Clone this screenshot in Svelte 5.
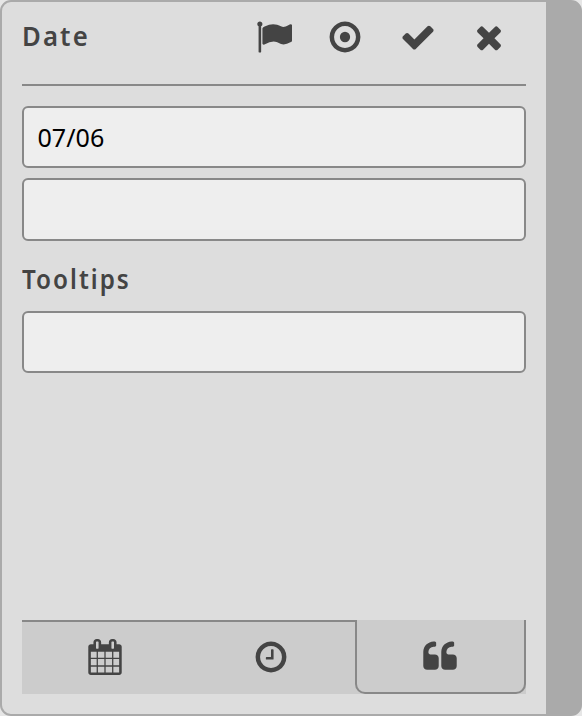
<script>
  const ring = 'q0 209-103 385.5t-279.5 279.5-385.5 103-385.5-103-279.5-279.5-103-385.5 103-385.5 279.5-279.5 385.5-103 385.5 103 279.5 279.5 103 385.5z';
  const quote = 'v384q0 80-56 136t-136 56h-384q-80 0-136-56t-56-136v-704q0-104 40.5-198.5t109.5-163.5 163.5-109.5 198.5-40.5h64q26 0 45 19t19 45v128q0 26-19 45t-45 19h-64q-106 0-181 75t-75 181v32q0 40 28 68t68 28h224q80 0 136 56t56 136z';
  const actions = [
    { name: 'Flag', width: 71, d: 'M320 256q0 72-64 110v1266q0 13-9.5 22.5t-22.5 9.5h-64q-13 0-22.5-9.5t-9.5-22.5v-1266q-64-38-64-110 0-53 37.5-90.5t90.5-37.5 90.5 37.5 37.5 90.5zm1472 64v763q0 25-12.5 38.5t-39.5 27.5q-215 116-369 116-61 0-123.5-22t-108.5-48-115.5-48-142.5-22q-192 0-464 146-17 9-33 9-26 0-45-19t-19-45v-742q0-32 31-55 21-14 79-43 236-120 421-120 107 0 200 29t219 88q38 19 88 19 54 0 117.5-21t110-47 88-47 54.5-21q26 0 45 19t19 45z' },
    { name: 'Target', width: 72, d: 'M896 640q106 0 181 75t75 181-75 181-181 75-181-75-75-181 75-181 181-75zm0-288q-148 0-273 73t-198 198-73 273 73 273 198 198 273 73 273-73 198-198 73-273-73-273-198-198-273-73zm768 544' + ring },
    { name: 'Confirm', width: 74, d: 'M1671 566q0 40-28 68l-724 724-136 136q-28 28-68 28t-68-28l-136-136-362-362q-28-28-28-68t28-68l136-136q28-28 68-28t68 28l294 295 656-657q28-28 68-28t68 28l136 136q28 28 28 68z' },
    { name: 'Close', width: 68, d: 'M1490 1322q0 40-28 68l-136 136q-28 28-68 28t-68-28l-294-294-294 294q-28 28-68 28t-68-28l-136-136q-28-28-28-68t28-68l294-294-294-294q-28-28-28-68t28-68l136-136q28-28 68-28t68 28l294 294 294-294q28-28 68-28t68 28l136 136q28 28 28 68t-28 68l-294 294 294 294q28 28 28 68z' },
  ];
  const tabs = [
    { name: 'Calendar', d: 'M192 1664h288v-288h-288v288zm352 0h320v-288h-320v288zm-352-352h288v-320h-288v320zm352 0h320v-320h-320v320zm-352-384h288v-288h-288v288zm736 736h320v-288h-320v288zm-384-736h320v-288h-320v288zm768 736h288v-288h-288v288zm-384-352h320v-320h-320v320zm-352-864v-288q0-13-9.5-22.5t-22.5-9.5h-64q-13 0-22.5 9.5t-9.5 22.5v288q0 13 9.5 22.5t22.5 9.5h64q13 0 22.5-9.5t9.5-22.5zm736 864h288v-320h-288v320zm-384-384h320v-288h-320v288zm384 0h288v-288h-288v288zm32-480v-288q0-13-9.5-22.5t-22.5-9.5h-64q-13 0-22.5 9.5t-9.5 22.5v288q0 13 9.5 22.5t22.5 9.5h64q13 0 22.5-9.5t9.5-22.5zm384-64v1280q0 52-38 90t-90 38h-1408q-52 0-90-38t-38-90v-1280q0-52 38-90t90-38h128v-96q0-66 47-113t113-47h64q66 0 113 47t47 113v96h384v-96q0-66 47-113t113-47h64q66 0 113 47t47 113v96h128q52 0 90 38t38 90z' },
    { name: 'Time', d: 'M1024 544v448q0 14-9 23t-23 9h-320q-14 0-23-9t-9-23v-64q0-14 9-23t23-9h224v-352q0-14 9-23t23-9h64q14 0 23 9t9 23zm416 352q0-148-73-273t-198-198-273-73-273 73-198 198-73 273 73 273 198 198 273 73 273-73 198-198 73-273zm224 0' + ring },
    { name: 'Quote', d: 'M832 960' + quote + 'M1728 960' + quote },
  ];
  let active = $state('Quote');
  let date = $state('07/06');
  let note = $state('');
  let tooltip = $state('');
</script>

{#snippet icon(d)}
  <svg width="36" height="36" viewBox="0 0 1792 1792" aria-hidden="true"><path {d} /></svg>
{/snippet}

<main class="panel">
  <header>
    <h1><span>Date</span></h1>
    <nav>
      {#each actions as a}
        <button style="width: {a.width}px" aria-label={a.name}>{@render icon(a.d)}</button>
      {/each}
    </nav>
  </header>
  <div class="field"><input aria-label="Date" bind:value={date} /></div>
  <div class="field second"><input aria-label="Note" bind:value={note} /></div>
  <h2><span>Tooltips</span></h2>
  <div class="field"><input aria-label="Tooltips" bind:value={tooltip} /></div>
  <footer>
    {#each tabs as t}
      <button class:active={active === t.name} aria-label={t.name} onclick={() => (active = t.name)}>
        {@render icon(t.d)}
      </button>
    {/each}
  </footer>
</main>

<style>
  :global(body) { background: #e6e6e6; }
  .panel {
    box-sizing: border-box;
    width: 582px;
    height: 716px;
    padding: 0 20px 20px;
    border: 2px solid #aaa;
    border-right-width: 36px;
    border-radius: 11px;
    background: #ddd;
    color: #444;
    display: flex;
    flex-direction: column;
    font-family: "Noto Sans", "Open Sans", sans-serif;
  }
  header {
    box-sizing: border-box;
    height: 84px;
    border-bottom: 2px solid #888;
    margin-bottom: 20px;
    display: flex;
    justify-content: space-between;
  }
  h1, h2 {
    margin: 0;
    font-size: 26.5px;
    font-weight: 600;
    letter-spacing: 2.2px;
    line-height: 36px;
  }
  h1 { padding-top: 16px; }
  h2 { height: 36px; margin: 20px 0 14px; }
  h1 span, h2 span { display: inline-block; transform: scaleX(.97); transform-origin: left; }
  h2 span { transform: scaleX(.915); }
  nav { display: flex; width: 288px; padding-top: 17px; }
  button {
    box-sizing: border-box;
    padding: 0;
    border: 0;
    background: none;
    flex: none;
    display: flex;
    justify-content: center;
    color: inherit;
  }
  svg { display: block; flex: none; fill: #444; }
  .field {
    box-sizing: border-box;
    height: 62px;
    border: 2px solid #888;
    border-radius: 6px;
    background: #eee;
    overflow: hidden;
  }
  .second { height: 63px; margin-top: 10px; }
  input {
    box-sizing: border-box;
    width: 104%;
    height: 100%;
    padding: 0 14px;
    border: 0;
    outline: 0;
    background: transparent;
    color: #000;
    font: 26px "Noto Sans", "Open Sans", sans-serif;
    transform: scaleX(.965);
    transform-origin: left;
  }
  footer { margin-top: auto; height: 74px; display: flex; background: #ccc; }
  footer button {
    flex: 0 0 166.5px;
    padding-top: 17px;
    padding-right: 1px;
    border-top: 2px solid #888;
  }
  footer button.active {
    flex: 1;
    padding: 19px 2px 0 0;
    border: 2px solid #888;
    border-top: 0;
    border-radius: 0 0 10px 10px;
  }
</style>
